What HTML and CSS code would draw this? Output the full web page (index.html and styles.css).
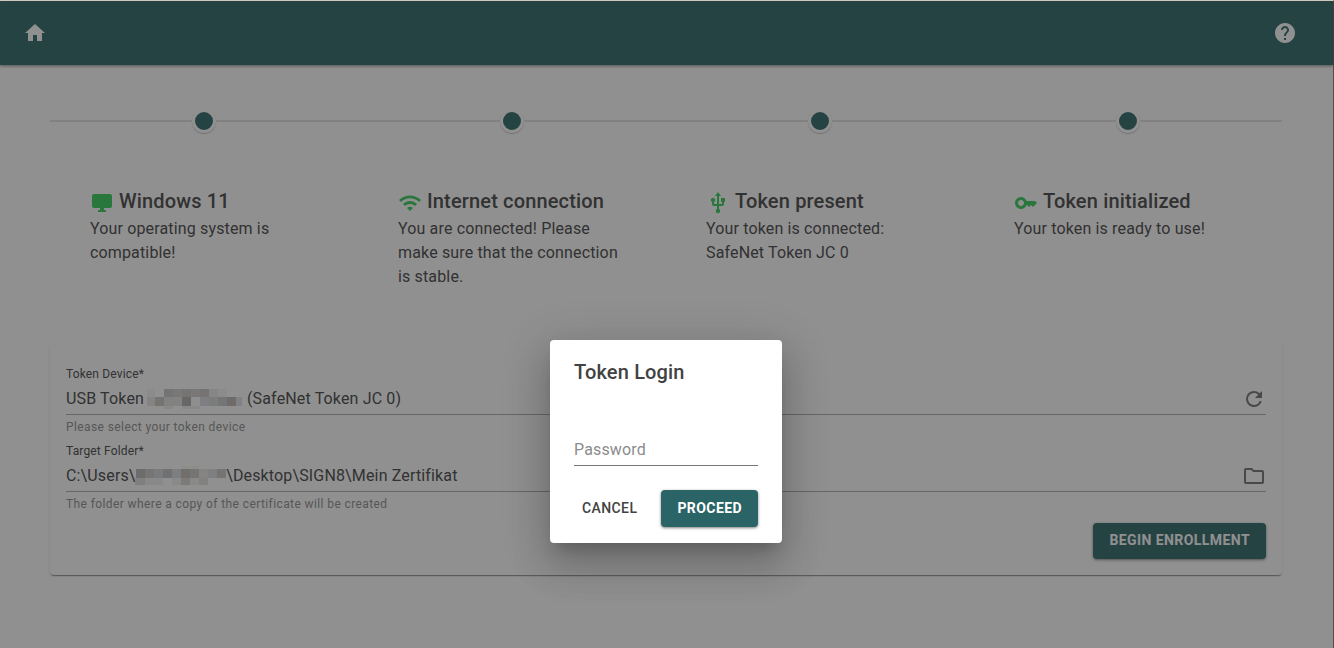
FILE: index.html
```html
<!DOCTYPE html>
<html lang="en">
<head>
<meta charset="utf-8">
<title>Token enrollment</title>
<link rel="stylesheet" href="styles.css">
</head>
<body>
<div class="app">
  <header class="toolbar">
    <button class="icon-button" type="button" aria-label="Home">
      <svg class="icon" viewBox="0 0 24 24"><path d="M10 20v-6h4v6h5v-8h3L12 3 2 12h3v8z"/></svg>
    </button>
    <button class="icon-button" type="button" aria-label="Help">
      <svg class="icon" viewBox="0 0 24 24"><path d="M12 2C6.48 2 2 6.48 2 12s4.480 10 10 10 10-4.480 10-10S17.520 2 12 2zm1 17h-2v-2h2v2zm2.070-7.750l-.9.920C13.450 12.900 13 13.500 13 15h-2v-.5c0-1.100.450-2.100 1.170-2.830l1.240-1.260c.370-.360.590-.860.590-1.410 0-1.100-.9-2-2-2s-2 .9-2 2H8c0-2.210 1.790-4 4-4s4 1.790 4 4c0 .880-.360 1.680-.930 2.250z"/></svg>
    </button>
  </header>

  <main class="content">
    <ol class="timeline">
      <li class="step">
        <span class="dot"></span>
        <div class="step-body">
          <h2 class="step-title"><svg class="icon" viewBox="0 0 24 24"><path d="M4 3h16a2 2 0 0 1 2 2v10a2 2 0 0 1-2 2h-6v2h2v2H8v-2h2v-2H4a2 2 0 0 1-2-2V5a2 2 0 0 1 2-2z"/></svg>Windows 11</h2>
          <p class="step-text">Your operating system is compatible!</p>
        </div>
      </li>
      <li class="step">
        <span class="dot"></span>
        <div class="step-body">
          <h2 class="step-title"><svg class="icon" viewBox="0 0 24 24"><path d="M1 9l2 2c4.970-4.970 13.030-4.970 18 0l2-2C16.930 2.930 7.080 2.930 1 9zm8 8l3 3 3-3c-1.650-1.660-4.340-1.660-6 0zm-4-4l2 2c2.760-2.760 7.240-2.760 10 0l2-2C15.140 9.140 8.870 9.140 5 13z"/></svg>Internet connection</h2>
          <p class="step-text">You are connected! Please make sure that the connection is stable.</p>
        </div>
      </li>
      <li class="step">
        <span class="dot"></span>
        <div class="step-body">
          <h2 class="step-title"><svg class="icon" viewBox="0 0 24 24"><path d="M15 7v4h1v2h-3V5h2l-3-4-3 4h2v8H8v-2.070c.7-.370 1.200-1.080 1.200-1.930 0-1.210-.990-2.200-2.200-2.200S4.800 7.790 4.800 9c0 .850.5 1.560 1.200 1.930V13c0 1.110.890 2 2 2h3v3.050c-.710.370-1.200 1.100-1.200 1.950a2.200 2.200 0 0 0 4.400 0c0-.850-.490-1.580-1.200-1.950V15h3c1.110 0 2-.890 2-2v-2h1V7h-4z"/></svg>Token present</h2>
          <p class="step-text">Your token is connected: SafeNet Token JC 0</p>
        </div>
      </li>
      <li class="step">
        <span class="dot"></span>
        <div class="step-body">
          <h2 class="step-title"><svg class="icon" viewBox="0 0 24 24"><path d="M21 10h-8.350C11.830 7.670 9.610 6 7 6c-3.310 0-6 2.690-6 6s2.690 6 6 6c2.610 0 4.830-1.670 5.650-4H13l2 2 2-2 2 2 4-4.040L21 10zM7 15c-1.650 0-3-1.350-3-3s1.350-3 3-3 3 1.350 3 3-1.350 3-3 3z"/></svg>Token initialized</h2>
          <p class="step-text">Your token is ready to use!</p>
        </div>
      </li>
    </ol>

    <form class="card">
      <div class="field">
        <label class="field-label" for="device">Token Device*</label>
        <div class="field-row">
          <select class="field-input" id="device">
            <option>USB Token&nbsp;&nbsp;&nbsp;&nbsp;&nbsp;&nbsp;&nbsp;&nbsp;&nbsp;&nbsp;&nbsp;&nbsp;&nbsp;&nbsp;&nbsp;&nbsp;&nbsp;&nbsp;&nbsp;&nbsp;&nbsp;&nbsp;&nbsp;&nbsp;&nbsp;(SafeNet Token JC 0)</option>
          </select>
          <svg class="mask mask-device" viewBox="0 0 95 20" shape-rendering="crispEdges">
            <path fill="#f5f5f5" d="M0 0h8v8H0zM71 0h9v8h-9z"/>
            <path fill="#c6c6c6" d="M17 0h9v8h-9z"/>
            <path fill="#d1cfcc" d="M26 0h9v8h-9zM44 0h9v8h-9z"/>
            <path fill="#c9c6c4" d="M35 0h9v8h-9zM53 0h9v8h-9z"/>
            <path fill="#ebebeb" d="M62 0h9v8h-9z"/>
            <path fill="#e9e7e5" d="M0 8h8v9H0z"/>
            <path fill="#c8c7c0" d="M8 8h9v9H8z"/>
            <path fill="#e2e2e2" d="M17 8h18v9H17z"/>
            <path fill="#adadad" d="M35 8h9v9h-9z"/>
            <path fill="#fafafa" d="M44 8h9v9h-9z"/>
            <path fill="#dadde3" d="M53 8h9v9h-9z"/>
            <path fill="#d5d6d6" d="M62 8h9v9h-9z"/>
            <path fill="#c7c9cb" d="M71 8h9v9h-9z"/>
            <path fill="#bbb4b1" d="M80 8h9v9h-9z"/>
            <path fill="#dfe3e8" d="M89 8h6v9h-6z"/>
            <path fill="#f1f1ef" d="M17 17h9v3h-9zM35 17h18v3H35z"/>
          </svg>
          <button class="icon-button" type="button" aria-label="Refresh">
            <svg class="icon" viewBox="0 0 24 24"><path d="M17.650 6.350A7.960 7.960 0 0 0 12 4a8 8 0 1 0 7.730 10h-2.080A6 6 0 1 1 12 6c1.660 0 3.140.690 4.220 1.780L13 11h7V4z"/></svg>
          </button>
        </div>
        <p class="hint">Please select your token device</p>
      </div>
      <div class="field">
        <label class="field-label" for="folder">Target Folder*</label>
        <div class="field-row">
          <input class="field-input" id="folder" type="text" readonly value="C:\Users\&nbsp;&nbsp;&nbsp;&nbsp;&nbsp;&nbsp;&nbsp;&nbsp;&nbsp;&nbsp;&nbsp;&nbsp;&nbsp;&nbsp;&nbsp;&nbsp;&nbsp;&nbsp;&nbsp;&nbsp;&nbsp;&nbsp;\Desktop\SIGN8\Mein Zertifikat">
          <svg class="mask mask-folder" viewBox="0 0 91 19" shape-rendering="crispEdges">
            <path fill="#f8f8f6" d="M46 0h9v3h-9zM55 0h9v3h-9z"/>
            <path fill="#bbb7b3" d="M1 3h9v9H1z"/>
            <path fill="#cac8c6" d="M10 3h9v9h-9zM55 3h9v9h-9z"/>
            <path fill="#d2d4d7" d="M19 3h9v9h-9z"/>
            <path fill="#c0c1c3" d="M28 3h9v9h-9z"/>
            <path fill="#d7dce0" d="M37 3h9v9h-9z"/>
            <path fill="#c1bab6" d="M46 3h9v9h-9z"/>
            <path fill="#e8e7e5" d="M64 3h9v9h-9z"/>
            <path fill="#d9dde1" d="M73 3h9v9h-9z"/>
            <path fill="#c9c6c2" d="M82 3h9v9h-9z"/>
            <path fill="#dedddc" d="M0 12h10v7H0z"/>
            <path fill="#f0f0f0" d="M10 12h18v7H10zM37 12h9v7h-9z"/>
            <path fill="#d6d5d3" d="M46 12h9v7h-9z"/>
            <path fill="#f1f0ee" d="M55 12h9v7h-9z"/>
            <path fill="#e2e1df" d="M64 12h9v7h-9z"/>
          </svg>
          <button class="icon-button" type="button" aria-label="Choose folder">
            <svg class="icon" viewBox="0 0 24 24"><path d="M9.170 6l2 2H20v10H4V6h5.170M10 4H4c-1.100 0-1.990.9-1.990 2L2 18c0 1.100.9 2 2 2h16c1.100 0 2-.9 2-2V8c0-1.100-.9-2-2-2h-8l-2-2z"/></svg>
          </button>
        </div>
        <p class="hint">The folder where a copy of the certificate will be created</p>
      </div>
      <button class="button button-primary card-action" type="button">BEGIN ENROLLMENT</button>
    </form>
  </main>

  <div class="overlay">
    <form class="dialog" role="dialog" aria-labelledby="login-title">
      <h2 class="dialog-title" id="login-title">Token Login</h2>
      <input class="password" type="password" placeholder="Password" aria-label="Password">
      <div class="dialog-actions">
        <button class="button button-text" type="button">CANCEL</button>
        <button class="button button-primary" type="button">PROCEED</button>
      </div>
    </form>
  </div>
</div>
</body>
</html>
```

FILE: styles.css
```css
* { box-sizing: border-box; }

body {
  margin: 0;
  background: #fff;
  color: #424242;
  font: 400 16px/24px Roboto, sans-serif;
  letter-spacing: 0.009375em;
}

h2, p, ol { margin: 0; padding: 0; }

button, input, select {
  font: inherit;
  letter-spacing: inherit;
  color: inherit;
}

.app {
  position: relative;
  min-height: 100vh;
  border-top: 1px solid #e6d9d6;
  border-right: 1px solid #5e4a44;
}

.toolbar {
  display: flex;
  align-items: center;
  justify-content: space-between;
  height: 64px;
  padding: 0 36px 0 23px;
  background: #2a6466;
  color: #fff;
  box-shadow: 0 1px 3px rgba(0, 0, 0, 0.5);
}

.icon {
  display: block;
  flex: none;
  width: 24px;
  height: 24px;
  fill: currentColor;
}

.icon-button {
  flex: none;
  padding: 0;
  border: 0;
  background: none;
}

.content { padding: 44px 51px 72px 50px; }

.timeline {
  display: grid;
  grid-template-columns: repeat(4, 1fr);
  list-style: none;
  background: linear-gradient(#e0e0e0, #e0e0e0) 0 11px / 100% 2px no-repeat;
}

.step {
  display: flex;
  flex-direction: column;
  align-items: center;
}

.dot {
  width: 24px;
  height: 24px;
  border: 3px solid #fff;
  border-radius: 50%;
  background: #2a6466;
  box-shadow: 0 1px 1px rgba(0, 0, 0, 0.24);
}

.step-body {
  width: 100%;
  margin-top: 52px;
  padding: 0 40px;
}

.step-title {
  display: flex;
  align-items: center;
  gap: 5px;
  font-size: 20px;
  font-weight: 500;
  line-height: 32px;
}

.step-title .icon { color: #33cc59; margin-top: 4px; }

.card {
  display: flex;
  flex-direction: column;
  gap: 4px;
  margin-top: 55px;
  padding: 20px 16px 16px;
  border-radius: 4px;
  box-shadow: 0 2px 1px -1px rgba(0, 0, 0, 0.35), 0 1px 2px rgba(0, 0, 0, 0.2);
}

.field-label, .hint {
  display: block;
  font-size: 12px;
  line-height: 20px;
}

.hint {
  margin-top: 2px;
  color: #8c8c8c;
  letter-spacing: 0.0333em;
}

.field-row {
  position: relative;
  display: flex;
  align-items: center;
  height: 31px;
  border-bottom: 1px solid #aaa;
}

.field-row .icon-button { color: #707070; }

.field-input {
  flex: 1;
  min-width: 0;
  height: 30px;
  padding: 0;
  border: 0;
  outline: 0;
  background: none;
  appearance: none;
}

input.field-input { padding-bottom: 2px; }

/* Pixelated patches that hide private values inside the fields. */
.mask { position: absolute; }

.mask-device {
  left: 81px;
  top: 5px;
  width: 95px;
  height: 20px;
}

.mask-folder {
  left: 69px;
  top: 5px;
  width: 91px;
  height: 19px;
}

.button {
  height: 36px;
  border: 0;
  border-radius: 4px;
  font-size: 14px;
  font-weight: 500;
  letter-spacing: 0.03em;
}

.button-primary {
  padding: 0 16px 2px;
  background: #2a6466;
  color: #fff;
  font-weight: 700;
  box-shadow: 0 1px 3px rgba(0, 0, 0, 0.5);
}

.button-text {
  padding: 0 8px 2px;
  background: none;
}

.card-action {
  align-self: flex-end;
  margin-top: 5px;
}

.overlay {
  position: absolute;
  inset: 0;
  display: flex;
  align-items: flex-start;
  justify-content: center;
  padding: 339px 1px 0 0;
  background: rgba(33, 33, 33, 0.5);
}

.dialog {
  width: 232px;
  padding: 16px 24px;
  border-radius: 4px;
  background: #fff;
  box-shadow: 0 11px 15px -7px rgba(0, 0, 0, 0.2), 0 24px 38px 3px rgba(0, 0, 0, 0.14), 0 9px 46px 8px rgba(0, 0, 0, 0.12);
}

.dialog-title {
  font-size: 20px;
  font-weight: 500;
  line-height: 32px;
}

.password {
  display: block;
  width: 100%;
  height: 32px;
  margin-top: 46px;
  padding: 0;
  border: 0;
  border-bottom: 1px solid #757575;
  outline: 0;
  background: none;
}

.password::placeholder { color: #8c8c8c; }

.dialog-actions {
  display: flex;
  justify-content: flex-end;
  gap: 16px;
  margin-top: 24px;
}

.dialog-actions .button { height: 37px; }
```
